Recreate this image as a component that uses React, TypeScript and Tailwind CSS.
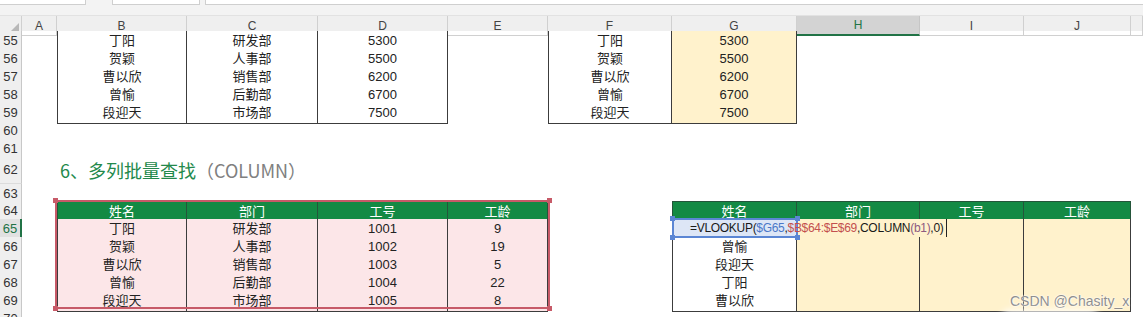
import React from 'react';

type Cell = { t?: React.ReactNode; c?: string };
type Row = { n: number | string; h: string; cells: Cell[]; active?: boolean };

const COLS =
  'grid grid-cols-[22px_35px_130px_131px_130px_100px_124px_125px_123px_104px_107px_12px]';
const FONT = "font-['Liberation_Sans','Noto_Sans_CJK_SC',sans-serif]";
const LETTERS = ['A', 'B', 'C', 'D', 'E', 'F', 'G', 'H', 'I', 'J', ''];

const bd = 'border-[#3c3c3c]';
const plain = `bg-white border-r border-b ${bd}`;
const plainL = `${plain} border-l`;
const gold = `bg-[#fff2cc] border-r border-b ${bd}`;
const pink = `bg-[#fce6e8] border-r border-b ${bd}`;
const pinkL = `${pink} border-l`;
const head = `bg-[#138a44] text-white border-t border-r border-b border-[#24553a]`;
const headL = `${head} border-l`;

const names = ['丁阳', '贺颖', '曹以欣', '曾愉', '段迎天'];
const depts = ['研发部', '人事部', '销售部', '后勤部', '市场部'];
const pay = ['5300', '5500', '6200', '6700', '7500'];
const ids = ['1001', '1002', '1003', '1004', '1005'];
const years = ['9', '19', '5', '22', '8'];
const lookup = ['', '曾愉', '段迎天', '丁阳', '曹以欣'];

const empty = (): Cell[] => Array.from({ length: 11 }, () => ({}));

function buildRows(): Row[] {
  const rows: Row[] = [];
  names.forEach((name, i) => {
    const cells = empty();
    cells[1] = { t: name, c: plainL };
    cells[2] = { t: depts[i], c: plain };
    cells[3] = { t: pay[i], c: plain };
    cells[5] = { t: name, c: plainL };
    cells[6] = { t: pay[i], c: gold };
    rows.push({ n: 55 + i, h: 'h-[18px]', cells });
  });
  rows.push({ n: 60, h: 'h-[18px]', cells: empty() });
  rows.push({ n: 61, h: 'h-[18px]', cells: empty() });

  const title = empty();
  title[1] = {
    t: (
      <span className="whitespace-nowrap text-[18px] font-['Noto_Sans_CJK_SC',sans-serif]">
        <span className="text-[#23894b]">6、多列批量查找</span>
        <span className="text-[#808080]">（COLUMN）</span>
      </span>
    ),
    c: 'justify-start pl-[3px] overflow-visible z-10',
  };
  rows.push({ n: 62, h: 'h-[27px]', cells: title });
  rows.push({ n: 63, h: 'h-[17px]', cells: empty() });

  const hdr = empty();
  ['姓名', '部门', '工号', '工龄'].forEach((t, i) => {
    hdr[1 + i] = { t, c: i === 0 ? headL : head };
    hdr[6 + i] = { t, c: i === 0 ? headL : head };
  });
  rows.push({ n: 64, h: 'h-[18px]', cells: hdr });

  names.forEach((name, i) => {
    const cells = empty();
    cells[1] = { t: name, c: pinkL };
    cells[2] = { t: depts[i], c: pink };
    cells[3] = { t: ids[i], c: pink };
    cells[4] = { t: years[i], c: pink };
    cells[6] = { t: lookup[i], c: plainL };
    cells[7] = { c: gold };
    cells[8] = { c: gold };
    cells[9] = { c: gold };
    rows.push({ n: 65 + i, h: 'h-[18px]', cells, active: i === 0 });
  });
  rows.push({ n: 70, h: 'h-[18px]', cells: empty() });
  return rows;
}

/** Small square drag handles on the corners of a range outline. */
function Handles({ color }: { color: string }) {
  return (
    <>
      <div className={`absolute -top-[4px] -left-[4px] h-[5px] w-[5px] ${color}`} />
      <div className={`absolute -top-[4px] -right-[4px] h-[5px] w-[5px] ${color}`} />
      <div className={`absolute -bottom-[4px] -left-[4px] h-[5px] w-[5px] ${color}`} />
      <div className={`absolute -right-[4px] -bottom-[4px] h-[5px] w-[5px] ${color}`} />
    </>
  );
}

export default function App() {
  const rows = buildRows();

  return (
    <div className={`relative h-[317px] w-[1143px] overflow-hidden bg-white text-[#222] ${FONT}`}>
      {/* formula bar strip */}
      <div className="flex h-[15px] items-start bg-[#f3f3f3]">
        <div className="h-[5px] w-[86px] border-r border-b border-[#cfcfcf] bg-white" />
        <div className="ml-[26px] h-[5px] w-[88px] border-x border-b border-[#cfcfcf] bg-white" />
        <div className="ml-[5px] h-[5px] flex-1 border-l border-b border-[#cfcfcf] bg-white" />
      </div>

      {/* column letters */}
      <div className={`${COLS} h-[16px] border-t border-[#e2e2e2] bg-[#efefef] text-[12px] text-[#444]`}>
        <div className="flex items-end justify-end border-r border-b border-[#d0d0d0] p-[2px]">
          <svg width="10" height="10" viewBox="0 0 10 10">
            <polygon points="10,0 10,10 0,10" fill="#b8b8b8" />
          </svg>
        </div>
        {LETTERS.map((l, i) => (
          <div
            key={i}
            className={
              l === 'H'
                ? 'flex items-center justify-center border-r border-b-2 border-r-[#c6c6c6] border-b-[#217346] bg-[#d3d3d3] text-[#217346]'
                : 'flex items-center justify-center border-r border-b border-[#d0d0d0]'
            }
          >
            {l}
          </div>
        ))}
      </div>

      {/* sheet rows */}
      {rows.map((r) => (
        <div key={r.n} className={`${COLS} ${r.h} text-[13px]`}>
          <div
            className={
              r.active
                ? 'flex items-center justify-center border-r-2 border-b border-r-[#217346] border-b-[#d6d6d6] bg-[#e1e1e1] text-[#217346]'
                : 'flex items-center justify-center border-r border-b border-r-[#c8c8c8] border-b-[#dcdcdc] bg-[#efefef] text-[#333]'
            }
          >
            {r.n}
          </div>
          {r.cells.map((c, i) => (
            <div key={i} className={`flex items-center justify-center overflow-hidden ${c.c ?? ''}`}>
              {c.t}
            </div>
          ))}
        </div>
      ))}

      {/* reference highlight B64:E69 */}
      <div className="absolute top-[200px] left-[55px] h-[109px] w-[495px] border-2 border-[#c75a68]">
        <Handles color="bg-[#c75a68]" />
      </div>

      {/* in-cell edit on row 65 */}
      <div className="absolute top-[218px] left-[672px] flex h-[20px] w-[275px] items-center">
        <div className="relative h-[20px] w-[126px] shrink-0 border-2 border-[#5b86d4] bg-[#dde6f6]">
          <Handles color="bg-[#5b86d4]" />
        </div>
        <div className="h-[18px] flex-1 border-r border-[#222] bg-[#fff2cc]" />
        <div className="absolute inset-y-0 left-[18px] flex items-center whitespace-nowrap text-[12px] tracking-[-0.3px] text-[#1a1a1a]">
          =VLOOKUP(<span className="text-[#4a78c8]">$G65</span>,
          <span className="text-[#c3504f]">$B$64:$E$69</span>,COLUMN
          <span className="text-[#8d5a80]">(b1)</span>,0)
        </div>
      </div>

      {/* watermark */}
      <div className="absolute top-[291px] left-[1000px] flex flex-col items-start">
        <div className="pl-[10px] text-[14px] whitespace-nowrap text-[#8f8f8f] [text-shadow:0_0_2px_#fff,0_0_2px_#fff]">
          CSDN @Chasity_x
        </div>
        <div className="mt-[-3px] h-[22px] w-[100px] rounded-full bg-white/80 blur-[3px]" />
      </div>
    </div>
  );
}
